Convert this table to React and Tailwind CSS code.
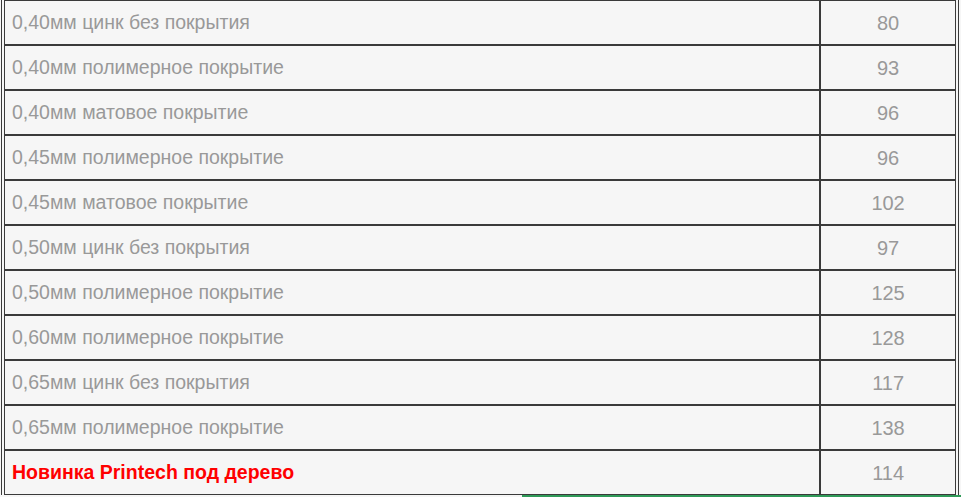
export default function App() {
  const rows = [
    ["0,40мм цинк без покрытия", "80"],
    ["0,40мм полимерное покрытие", "93"],
    ["0,40мм матовое покрытие", "96"],
    ["0,45мм полимерное покрытие", "96"],
    ["0,45мм матовое покрытие", "102"],
    ["0,50мм цинк без покрытия", "97"],
    ["0,50мм полимерное покрытие", "125"],
    ["0,60мм полимерное покрытие", "128"],
    ["0,65мм цинк без покрытия", "117"],
    ["0,65мм полимерное покрытие", "138"],
  ];
  return (
    <div className="w-[961px] h-[497px] overflow-hidden bg-[#f6f6f6]" style={{ fontFamily: '"Liberation Sans", Arial, sans-serif' }}>
      <div className="ml-[1px] w-[958px] border-x border-[#3a3a3a] px-[2px]">
        {rows.map(([name, price], i) => (
          <div key={i} className="flex h-[45px]">
            <div className="w-[817px] border border-[#3a3a3a] flex items-center pl-[7px] text-[19.5px] text-[#999999]">{name}</div>
            <div className="w-[136px] border border-[#3a3a3a] flex items-center justify-center text-[20px] text-[#999999]">{price}</div>
          </div>
        ))}
        <div className="flex h-[45px]">
          <div className="w-[817px] border border-[#3a3a3a] flex items-center pl-[7px] text-[19.5px] font-bold text-[#ff0000]">Новинка Printech под дерево</div>
          <div className="w-[136px] border border-[#3a3a3a] flex items-center justify-center text-[20px] text-[#999999]">114</div>
        </div>
      </div>
      <div className="ml-[522px] h-[2px] bg-[#2f9a58]"></div>
    </div>
  );
}
